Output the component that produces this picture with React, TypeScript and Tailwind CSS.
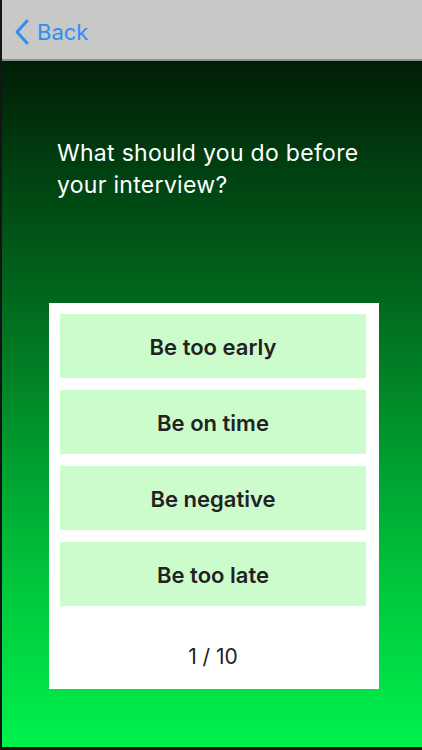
import React from "react";

const options = ["Be too early", "Be on time", "Be negative", "Be too late"];

export default function App() {
  return (
    <div
      className="w-[422px] h-[750px] flex flex-col bg-[#141414] pl-[2px] pb-[3px] overflow-hidden"
      style={{ fontFamily: "Inter, Roboto, 'Noto Sans', sans-serif" }}
    >
      <div className="h-[61px] shrink-0 bg-[#c8c9c7] border-b-[2px] border-[#8e8f8d] flex items-start pl-[10px] pt-[18px]">
        <div className="flex items-center gap-[5px] text-[#2f8ef0]">
          <svg width="20" height="28" viewBox="0 0 20 28" fill="none">
            <path d="M15 3 L5 14 L15 25" stroke="#2f8ef0" strokeWidth="3" strokeLinecap="round" strokeLinejoin="round" />
          </svg>
          <span className="text-[22px] leading-none">Back</span>
        </div>
      </div>
      <div className="flex-1 flex flex-col bg-[linear-gradient(180deg,#001e06_0%,#00691d_35%,#00c43c_75%,#00f24c_100%)]">
        <div className="pl-[55px] w-[380px] pt-[76px] text-white text-[23px] leading-[32px] tracking-[0.3px]">
          What should you do before your interview?
        </div>
        <div className="mt-[102px] ml-[47px] w-[330px] bg-white pt-[11px] pl-[11px] pr-[13px] pb-[20px] flex flex-col">
          <div className="flex flex-col gap-[12px]">
            {options.map((o) => (
              <div
                key={o}
                className="h-[64px] bg-[#cdfccc] flex items-center justify-center text-[22px] font-semibold text-[#222222] pt-[2px]"
              >
                {o}
              </div>
            ))}
          </div>
          <div className="mt-[39px] text-center text-[21px] text-[#222222] leading-[24px]">1 / 10</div>
        </div>
      </div>
    </div>
  );
}
